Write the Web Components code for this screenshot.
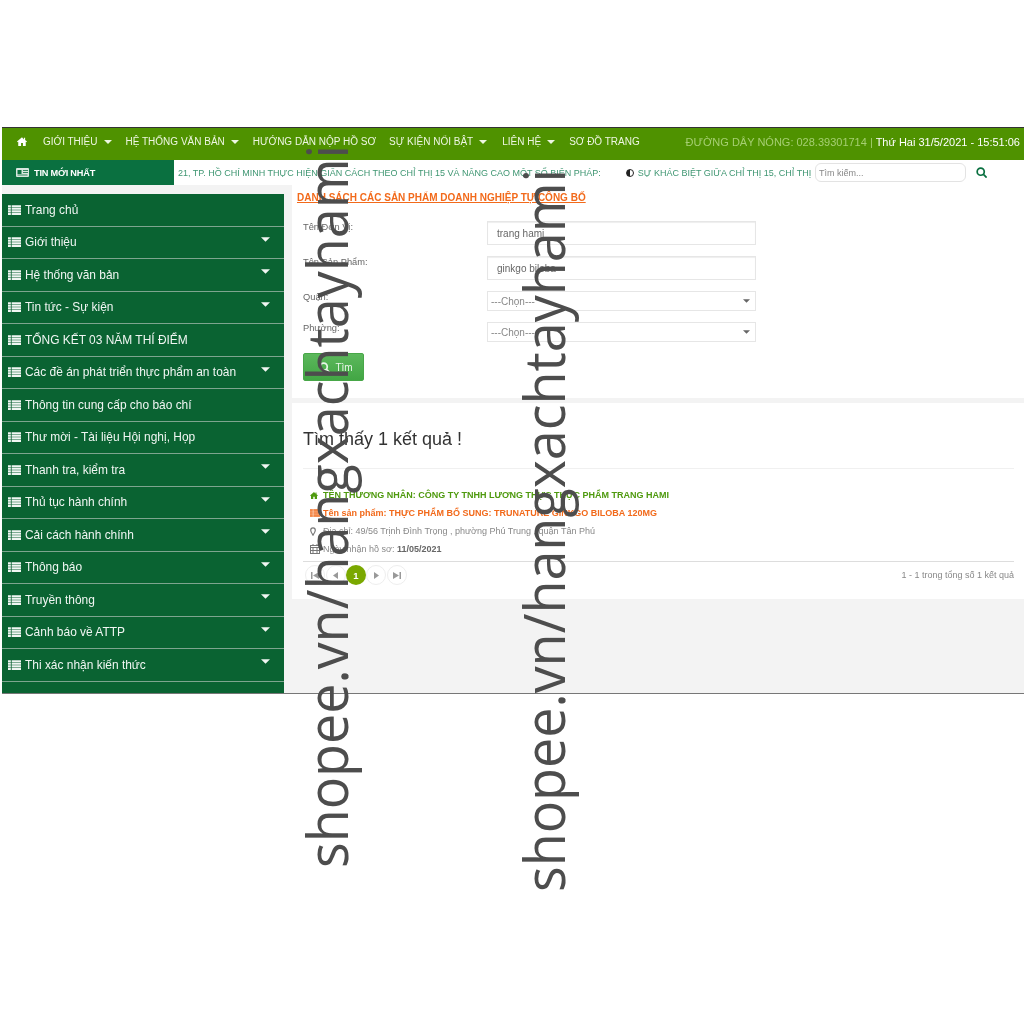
<!DOCTYPE html>
<html lang="vi">
<head>
<meta charset="utf-8">
<title>Danh sách sản phẩm</title>
<style>
    html, body { margin:0; padding:0; background:#fff; }
    body { font-family:"Liberation Sans", Arial, sans-serif; height:1024px; overflow:hidden; position:relative; }
</style>
</head>
<body>
<site-frame>
    <top-nav></top-nav>
    <news-bar></news-bar>
    <div slot="side">
        <side-item label="Trang chủ"></side-item>
        <side-item label="Giới thiệu" caret></side-item>
        <side-item label="Hệ thống văn bản" caret></side-item>
        <side-item label="Tin tức - Sự kiện" caret></side-item>
        <side-item label="TỔNG KẾT 03 NĂM THÍ ĐIỂM"></side-item>
        <side-item label="Các đề án phát triển thực phẩm an toàn" caret></side-item>
        <side-item label="Thông tin cung cấp cho báo chí"></side-item>
        <side-item label="Thư mời - Tài liệu Hội nghị, Họp"></side-item>
        <side-item label="Thanh tra, kiểm tra" caret></side-item>
        <side-item label="Thủ tục hành chính" caret></side-item>
        <side-item label="Cải cách hành chính" caret></side-item>
        <side-item label="Thông báo" caret></side-item>
        <side-item label="Truyền thông" caret></side-item>
        <side-item label="Cảnh báo về ATTP" caret></side-item>
        <side-item label="Thi xác nhận kiến thức" caret></side-item>
        <side-item label=""></side-item>
    </div>
    <search-form slot="main"></search-form>
    <result-card slot="main"></result-card>
</site-frame>
<water-mark style="left:293px;top:868px">shopee.vn/hangxachtayhami</water-mark>
<water-mark style="left:510px;top:892px">shopee.vn/hangxachtayhami</water-mark>

<script>
const ICONS = {
    home: '<svg viewBox="0 0 16 14" width="10" height="9" fill="currentColor"><path d="M8 0 0 7l1 1 1-.8V14h4.500V9.500h3V14H14V7.200l1 .8 1-1-3-2.600V1h-2v2.600z"/></svg>',
    list: '<svg viewBox="0 0 16 12" width="16" height="12" fill="currentColor"><path d="M0 0h3.500v2.500H0zM4.500 0H16v2.500H4.500zM0 3.200h3.500v2.500H0zM4.500 3.200H16v2.500H4.500zM0 6.400h3.500v2.500H0zM4.500 6.400H16v2.500H4.500zM0 9.500h3.500V12H0zM4.500 9.500H16V12H4.500z"/></svg>',
    caret: '<svg viewBox="0 0 8 4" width="8" height="4" fill="currentColor"><path d="M0 0h8L4 4z"/></svg>',
    search: '<svg viewBox="0 0 14 14" width="11" height="11" fill="none" stroke="currentColor" stroke-width="2.200"><circle cx="6" cy="6" r="4.500"/><path d="m9.500 9.500 4 4"/></svg>'
};

class SiteFrame extends HTMLElement {
    constructor() {
        super();
        this.attachShadow({ mode: "open" }).innerHTML = `
<style>
    :host { display:block; margin:127px 0 0 2px; height:565px; background:#f3f3f3; border-top:1px solid #333; border-bottom:1px solid #777; overflow:hidden; filter:blur(.35px); }
    .body { display:flex; }
    .side { width:282px; flex:none; padding-top:9px; margin-right:8px; }
    .main { flex:1; min-width:0; }
</style>
<slot></slot>
<div class="body">
    <div class="side"><slot name="side"></slot></div>
    <div class="main"><slot name="main"></slot></div>
</div>`;
    }
}

class TopNav extends HTMLElement {
    constructor() {
        super();
        const items = [
            ["GIỚI THIỆU", 1, 14], ["HỆ THỐNG VĂN BẢN", 1, 14], ["HƯỚNG DẪN NỘP HỒ SƠ", 0, 13],
            ["SỰ KIỆN NỔI BẬT", 1, 15], ["LIÊN HỆ", 1, 14], ["SƠ ĐỒ TRANG", 0, 0]
        ];
        this.attachShadow({ mode: "open" }).innerHTML = `
<style>
    :host { display:flex; align-items:center; height:32px; box-sizing:border-box; background:#4f9200; color:#fff; font-size:10px; padding:0 4px 5px 15px; white-space:nowrap; }
    .home { display:flex; margin-right:16px; }
    a { display:flex; align-items:center; gap:6px; color:#eef6e2; }
    a svg { margin-top:1px; }
    .hot { margin-left:auto; color:#a6cf72; font-size:11px; }
    .hot b { font-weight:normal; color:#fff; }
</style>
<span class="home">${ICONS.home}</span>
${items.map(i => `<a style="margin-right:${i[2]}px">${i[0]}${i[1] ? ICONS.caret : ""}</a>`).join("")}
<span class="hot">ĐƯỜNG DÂY NÓNG: 028.39301714 | <b>Thứ Hai 31/5/2021 - 15:51:06</b></span>`;
    }
}

class NewsBar extends HTMLElement {
    constructor() {
        super();
        this.attachShadow({ mode: "open" }).innerHTML = `
<style>
    :host { display:flex; align-items:center; height:25px; background:#fff; color:#3f9672; font-size:9px; white-space:nowrap; }
    .tag { width:158px; padding-left:14px; height:25px; flex:none; display:flex; align-items:center; gap:5px; background:#0a7040; color:#fff; font-weight:bold; font-size:9.200px; letter-spacing:-.2px; }
    .ticker { width:631px; margin-left:4px; display:flex; flex:none; }
    .ticker span:first-child { margin-right:25px; }
    .half { display:inline-block; width:8px; height:8px; border-radius:50%; border:1px solid #222; box-sizing:border-box; background:linear-gradient(90deg,#222 50%,#fff 50%); margin-right:4px; vertical-align:-1px; }
    input { width:143px; margin-left:6px; border:1px solid #e3e3e3; border-radius:6px; padding:0 3px; box-sizing:content-box; height:17px; font:9px "Liberation Sans", Arial, sans-serif; color:#777; outline:none; flex:none; }
    input::placeholder { color:#888; opacity:1; }
    .go { margin-left:10px; color:#0a7040; display:flex; }
</style>
<div class="tag"><svg width="13" height="9" viewBox="0 0 13 9"><rect width="13" height="9" rx="1" fill="#d9e6df"/><rect x="1.500" y="2" width="4" height="4" fill="#0a7040"/><path d="M7 2.500h5M7 4.500h5M1.500 7h10" stroke="#0a7040" stroke-width=".8"/></svg>TIN MỚI NHẤT</div>
<div class="ticker"><span>21, TP. HỒ CHÍ MINH THỰC HIỆN GIÃN CÁCH THEO CHỈ THỊ 15 VÀ NÂNG CAO MỘT SỐ BIỆN PHÁP:</span><span><i class="half"></i>SỰ KHÁC BIỆT GIỮA CHỈ THỊ 15, CHỈ THỊ</span></div>
<input placeholder="Tìm kiếm...">
<span class="go">${ICONS.search}</span>`;
    }
}

class SideItem extends HTMLElement {
    constructor() {
        super();
        const caret = this.hasAttribute("caret") ? `<span class="c">${ICONS.caret}</span>` : "";
        const label = this.getAttribute("label");
        this.attachShadow({ mode: "open" }).innerHTML = `
<style>
    :host { display:flex; align-items:center; height:31.500px; background:#0a6332; color:#f1f6f3; font-size:11.950px; padding-left:6px; border-bottom:1px solid #7ea58f; white-space:nowrap; }
    .i { display:flex; margin-right:4px; }
    .i svg { width:13px; height:10px; }
    .c { display:flex; margin-left:auto; margin-right:14px; margin-top:-6px; }
    .c svg { width:9px; height:5px; }
</style>
${label ? `<span class="i">${ICONS.list}</span><span>${label}</span>` : ""}${caret}`;
    }
}

class FormRow extends HTMLElement {
    constructor() {
        super();
        const label = this.getAttribute("label");
        const val = this.getAttribute("value");
        const field = val
            ? `<div class="f text">${val}</div>`
            : `<div class="f sel">---Chọn---<span>${ICONS.caret}</span></div>`;
        this.attachShadow({ mode: "open" }).innerHTML = `
<style>
    :host { display:flex; align-items:flex-start; font-size:9.300px; color:#666; }
    label { width:184px; flex:none; padding-top:1px; }
    .f { width:269px; box-sizing:border-box; border:1px solid #e6e6e6; display:flex; align-items:center; font-size:10px; }
    .text { height:24px; padding-left:9px; box-shadow:inset 0 1px 1px #eee; }
    .sel { height:20px; padding-left:3px; color:#888; }
    .sel span { margin-left:auto; margin-right:5px; display:flex; color:#666; }
    .sel svg { width:7px; height:4px; }
</style>
<label>${label}</label>${field}`;
    }
}

class SearchForm extends HTMLElement {
    constructor() {
        super();
        this.attachShadow({ mode: "open" }).innerHTML = `
<style>
    :host { display:block; background:#fff; height:213px; padding:0 0 0 5px; margin-bottom:5px; }
    h1 { margin:0 0 17px; padding-top:6px; font-size:10px; line-height:13px; color:#f26a1b; text-decoration:underline; font-weight:bold; }
    .rows { padding-left:6px; display:flex; flex-direction:column; }
    form-row:nth-child(-n+3) { margin-bottom:11px; }
    button { margin-top:11px; width:61px; height:28px; background:linear-gradient(#5cb85c,#42a644); border:1px solid #48a748; border-radius:2px; color:#e9f6e9; font:10px "Liberation Sans", Arial, sans-serif; display:flex; align-items:center; justify-content:center; gap:5px; padding:0 0 0 5px; }
</style>
<h1>DANH SÁCH CÁC SẢN PHẨM DOANH NGHIỆP TỰ CÔNG BỐ</h1>
<div class="rows">
    <form-row label="Tên Đơn Vị:" value="trang hami"></form-row>
    <form-row label="Tên Sản Phẩm:" value="ginkgo biloba"></form-row>
    <form-row label="Quận:"></form-row>
    <form-row label="Phường:"></form-row>
</div>
<div class="rows"><button type="button">${ICONS.search}Tìm</button></div>`;
    }
}

class ResultCard extends HTMLElement {
    constructor() {
        super();
        const btn = d => `<span class="pg"><svg width="8" height="7" viewBox="0 0 8 7" fill="#999"><path d="${d}"/></svg></span>`;
        this.attachShadow({ mode: "open" }).innerHTML = `
<style>
    :host { display:block; background:#fff; padding:0 10px 0 11px; height:196px; font-size:9px; color:#888; box-sizing:border-box; }
    h2 { margin:0; padding:26px 0 19px; font-size:18px; line-height:20px; font-weight:normal; color:#333; border-bottom:1px solid #f0f0f0; }
    .lines { padding-top:17px; display:flex; flex-direction:column; padding-left:7px; }
    .l { display:flex; align-items:center; height:18px; white-space:nowrap; }
    .l svg { flex:none; }
    .ic { width:13px; display:flex; flex:none; }
    .g { color:#4f9a0f; font-weight:bold; }
    .o { color:#f26a1b; font-weight:bold; }
    b { color:#666; }
    .pager { border-top:1px solid #ddd; margin-top:3px; height:26px; display:flex; align-items:center; padding-left:2px; }
    .pg { width:20px; height:20px; border:1px solid #eee; border-radius:50%; display:flex; align-items:center; justify-content:center; box-sizing:border-box; margin-right:1px; background:#fff; flex:none; }
    .cur { background:#7aa800; border:none; color:#fff; font-weight:bold; font-size:9.500px; margin:0 0 0 -1px; }
    .tot { margin-left:auto; color:#888; }
</style>
<h2>Tìm thấy 1 kết quả !</h2>
<div class="lines">
    <div class="l g"><span class="ic">${ICONS.home.replace('width="10" height="9"','width="8" height="7"')}</span>TÊN THƯƠNG NHÂN: CÔNG TY TNHH LƯƠNG THỰC THỰC PHẨM TRANG HAMI</div>
    <div class="l o"><span class="ic"><svg width="10" height="8" viewBox="0 0 16 12" fill="currentColor"><path d="M0 0h16v12H0z"/><path d="M0 3h16M0 6h16M0 9h16M5 0v12" stroke="#fff" stroke-width=".8"/></svg></span>Tên sản phẩm: THỰC PHẨM BỔ SUNG: TRUNATURE GINKGO BILOBA 120MG</div>
    <div class="l"><span class="ic"><svg width="6" height="9" viewBox="0 0 6 9" fill="none" stroke="#777" stroke-width="1.200"><path d="M3 8.200C1.500 6 .7 4.800.7 3.200a2.300 2.300 0 0 1 4.600 0C5.300 4.800 4.500 6 3 8.200z"/></svg></span>Địa chỉ: 49/56 Trịnh Đình Trọng , phường Phú Trung , quận Tân Phú</div>
    <div class="l"><span class="ic"><svg width="10" height="10" viewBox="0 0 10 10" fill="none" stroke="#777"><rect x=".5" y="1.500" width="9" height="8"/><path d="M0 3.500h10M3 0v2M7 0v2M3 3.500v6M7 3.500v6M.5 6.500h9"/></svg></span>Ngày nhận hồ sơ:&nbsp;<b>11/05/2021</b></div>
</div>
<div class="pager">
    ${btn("M0 0h1.500v7H0zM8 0v7L2 3.500z")}
    ${btn("M6 0v7L1 3.500z")}
    <span class="pg cur">1</span>
    ${btn("M2 0v7l5-3.500z")}
    ${btn("M0 0v7l6-3.500zM6.500 0H8v7H6.500z")}
    <span class="tot">1 - 1 trong tổng số 1 kết quả</span>
</div>`;
    }
}

class WaterMark extends HTMLElement {
    constructor() {
        super();
        this.attachShadow({ mode: "open" }).innerHTML = `
<style>
    :host { position:absolute; display:block; transform-origin:0 0; transform:rotate(-90deg) scaleX(.945); font:57px/66px "Open Sans", sans-serif; color:#4d4d4d; white-space:nowrap; filter:blur(.3px); }
</style>
<slot></slot>`;
    }
}

customElements.define("site-frame", SiteFrame);
customElements.define("top-nav", TopNav);
customElements.define("news-bar", NewsBar);
customElements.define("side-item", SideItem);
customElements.define("form-row", FormRow);
customElements.define("search-form", SearchForm);
customElements.define("result-card", ResultCard);
customElements.define("water-mark", WaterMark);
</script>
</body>
</html>
